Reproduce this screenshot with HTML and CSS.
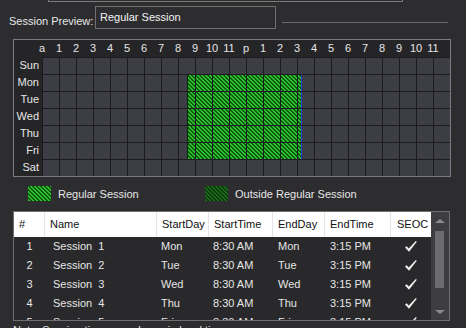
FILE: index.html
```html
<!DOCTYPE html>
<html>
<head>
<meta charset="utf-8">
<link rel="stylesheet" href="styles.css">
</head>
<body>
<div class="topbar"></div>
<div class="preview-row">
  <span class="preview-label">Session Preview:</span>
  <div class="preview-input">Regular Session</div>
  <div class="preview-rule"></div>
</div>
<div class="schedule">
  <div class="hours">
    <span>a</span><span>1</span><span>2</span><span>3</span><span>4</span><span>5</span><span>6</span><span>7</span><span>8</span><span>9</span><span>10</span><span>11</span><span>p</span><span>1</span><span>2</span><span>3</span><span>4</span><span>5</span><span>6</span><span>7</span><span>8</span><span>9</span><span>10</span><span>11</span>
  </div>
  <div class="schedule-body">
    <div class="days">
      <span>Sun</span><span>Mon</span><span>Tue</span><span>Wed</span><span>Thu</span><span>Fri</span><span>Sat</span>
    </div>
    <div class="cells">
      <div class="session" style="left:144.5px;top:17px;width:115.5px;height:85px"></div>
    </div>
  </div>
</div>
<div class="legend">
  <div class="legend-item"><span class="swatch swatch-regular"></span>Regular Session</div>
  <div class="legend-item"><span class="swatch swatch-outside"></span>Outside Regular Session</div>
</div>
<div class="table">
  <div class="table-main">
    <div class="row thead">
      <span class="c-num">#</span><span>Name</span><span>StartDay</span><span>StartTime</span><span>EndDay</span><span>EndTime</span><span>SEOC</span>
    </div>
    <div class="row">
      <span class="c-num">1</span><span class="c-name">Session&nbsp; 1</span><span>Mon</span><span>8:30 AM</span><span class="c-end">Mon</span><span class="c-end">3:15 PM</span><span class="c-check"><svg width="12" height="11" viewBox="0 0 12 11"><polygon points="0,6.5 1.6,5.2 3.8,7.6 10.8,0 11.8,0.8 4,10.8" fill="#f2f2f2"/></svg></span>
    </div>
    <div class="row">
      <span class="c-num">2</span><span class="c-name">Session&nbsp; 2</span><span>Tue</span><span>8:30 AM</span><span class="c-end">Tue</span><span class="c-end">3:15 PM</span><span class="c-check"><svg width="12" height="11" viewBox="0 0 12 11"><polygon points="0,6.5 1.6,5.2 3.8,7.6 10.8,0 11.8,0.8 4,10.8" fill="#f2f2f2"/></svg></span>
    </div>
    <div class="row">
      <span class="c-num">3</span><span class="c-name">Session&nbsp; 3</span><span>Wed</span><span>8:30 AM</span><span class="c-end">Wed</span><span class="c-end">3:15 PM</span><span class="c-check"><svg width="12" height="11" viewBox="0 0 12 11"><polygon points="0,6.5 1.6,5.2 3.8,7.6 10.8,0 11.8,0.8 4,10.8" fill="#f2f2f2"/></svg></span>
    </div>
    <div class="row">
      <span class="c-num">4</span><span class="c-name">Session&nbsp; 4</span><span>Thu</span><span>8:30 AM</span><span class="c-end">Thu</span><span class="c-end">3:15 PM</span><span class="c-check"><svg width="12" height="11" viewBox="0 0 12 11"><polygon points="0,6.5 1.6,5.2 3.8,7.6 10.8,0 11.8,0.8 4,10.8" fill="#f2f2f2"/></svg></span>
    </div>
    <div class="row">
      <span class="c-num">5</span><span class="c-name">Session&nbsp; 5</span><span>Fri</span><span>8:30 AM</span><span class="c-end">Fri</span><span class="c-end">3:15 PM</span><span class="c-check"><svg width="12" height="11" viewBox="0 0 12 11"><polygon points="0,6.5 1.6,5.2 3.8,7.6 10.8,0 11.8,0.8 4,10.8" fill="#f2f2f2"/></svg></span>
    </div>
  </div>
  <div class="scrollbar">
    <div class="sb-btn"><span class="arrow-up"></span></div>
    <div class="sb-track"><div class="sb-thumb"></div></div>
    <div class="sb-btn"><span class="arrow-down"></span></div>
  </div>
</div>
<div class="note">Note: Session times are shown in local time zone.</div>
</body>
</html>
```
FILE: styles.css
```css
html, body {
  margin: 0;
  padding: 0;
}
body {
  width: 466px;
  height: 328px;
  overflow: hidden;
  background: #2d2d30;
  color: #e6e6e6;
  font-family: "Liberation Sans", Arial, sans-serif;
  font-size: 11px;
}

.topbar {
  margin-left: 48px;
  width: 353px;
  height: 1px;
  border: 1px solid #7a7a7a;
  border-top: none;
}

.preview-row {
  display: flex;
  align-items: flex-start;
  margin-top: 4px;
  padding-left: 9px;
  height: 23px;
}
.preview-label {
  width: 86px;
  margin-top: 9px;
  line-height: 13px;
  color: #e8e8e8;
}
.preview-input {
  box-sizing: border-box;
  width: 181px;
  height: 23px;
  border: 1px solid #707070;
  padding: 3px 4px 0;
  line-height: 14px;
  color: #f2f2f2;
}
.preview-rule {
  flex: 1;
  margin: 16px 18px 0 6px;
  border-top: 1px solid #6a6a6a;
}

.schedule {
  margin: 10px 0 0 13px;
  width: 436px;
  border: 1px solid #7c7c7c;
  background: #252528;
}
.hours {
  display: flex;
  height: 17px;
  padding-left: 19.5px;
  overflow: hidden;
}
.hours span {
  flex: 0 0 17px;
  text-align: center;
  line-height: 17px;
  color: #e6e6e6;
}
.schedule-body {
  display: flex;
}
.days {
  display: flex;
  flex-direction: column;
  width: 28px;
}
.days span {
  height: 17px;
  line-height: 17px;
  text-align: right;
  padding-right: 3px;
  color: #e6e6e6;
}
.cells {
  position: relative;
  width: 408px;
  height: 119px;
  background: #3d3d45;
}
.cells::after {
  content: "";
  position: absolute;
  inset: 0;
  background-image:
    repeating-linear-gradient(to right, #1b1b21 0 1px, transparent 1px 17px),
    repeating-linear-gradient(to bottom, #1b1b21 0 1px, transparent 1px 17px);
}
.session {
  position: absolute;
  box-sizing: border-box;
  border-left: 1px solid #0c260c;
  border-right: 1px solid #2438e0;
  background: repeating-linear-gradient(45deg, #2dc22d 0 1.5px, #0b5a0b 1.5px 2.83px);
}

.legend {
  display: flex;
  align-items: center;
  margin-top: 9px;
  padding-left: 28px;
  height: 15px;
}
.legend-item {
  display: flex;
  align-items: center;
  color: #e6e6e6;
}
.legend-item:first-child {
  width: 177px;
}
.swatch {
  width: 23px;
  height: 15px;
  margin-right: 7px;
}
.swatch-regular {
  background: repeating-linear-gradient(45deg, #2dc22d 0 1.5px, #0b5a0b 1.5px 2.83px);
}
.swatch-outside {
  background: repeating-linear-gradient(45deg, #1c6a1c 0 1.5px, #0b3a0b 1.5px 2.83px);
}

.table {
  display: flex;
  margin: 10px 0 0 13px;
  width: 435px;
  height: 108px;
  border: 1px solid #6e6e6e;
  background: #29292b;
  overflow: hidden;
}
.table-main {
  width: 417px;
  min-height: 0;
  overflow: hidden;
}
.row {
  display: grid;
  grid-template-columns: 31px 112px 52px 64px 52px 66px 40px;
  height: 19px;
  line-height: 19px;
  color: #e6e6e6;
}
.row span {
  padding-left: 4px;
  white-space: nowrap;
}
.row .c-num {
  padding-left: 0;
  text-align: center;
}
.row .c-name {
  padding-left: 8px;
}
.row .c-end {
  padding-left: 5px;
}
.row .c-check {
  padding-left: 0;
  display: flex;
  align-items: center;
  justify-content: center;
}
.thead {
  height: 25px;
  line-height: 25px;
  background: #ffffff;
  color: #111111;
}
.thead span {
  padding-left: 5px;
  border-right: 1px solid #e4e4e4;
}
.thead span.c-num {
  padding-left: 5px;
  text-align: left;
}
.thead span:last-child {
  padding-left: 6px;
  border-right: none;
}

.scrollbar {
  display: flex;
  flex-direction: column;
  width: 18px;
  background: #3e3e41;
}
.sb-btn {
  height: 17px;
  display: flex;
  align-items: center;
  justify-content: center;
}
.arrow-up {
  width: 0;
  height: 0;
  border-left: 5px solid transparent;
  border-right: 5px solid transparent;
  border-bottom: 4px solid #8c8c8c;
}
.arrow-down {
  width: 0;
  height: 0;
  border-left: 5px solid transparent;
  border-right: 5px solid transparent;
  border-top: 4px solid #8c8c8c;
}
.sb-track {
  flex: 1;
}
.sb-thumb {
  margin: 2px 0 0 4px;
  width: 9px;
  height: 57px;
  background: #6c6c6e;
}

.note {
  margin: 3px 0 0 13px;
  line-height: 13px;
  color: #e6e6e6;
  white-space: nowrap;
}
```
